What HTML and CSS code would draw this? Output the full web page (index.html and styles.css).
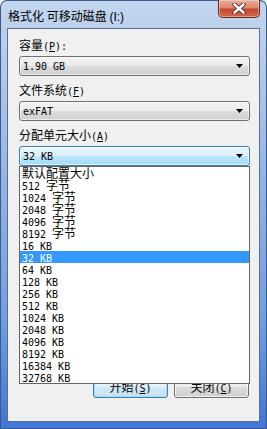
FILE: index.html
```html
<!DOCTYPE html>
<html lang="zh-CN">

<head>
    <meta charset="UTF-8">
    <meta name="viewport" content="width=device-width, initial-scale=1.0">
    <title>格式化 可移动磁盘 (I:)</title>
    <link rel="stylesheet" href="styles.css">
</head>

<body>
    <div class="window">
        <div class="titlebar">
            <span class="title">格式化 可移动磁盘 <span class="ui">(I:)</span></span>
            <button class="close" aria-label="关闭">
                <svg width="14" height="11" viewBox="0 0 14 11">
                    <path d="M2.5 1.5 L11.5 9.5 M11.5 1.5 L2.5 9.5" stroke="#4a1a12" stroke-width="4.2" stroke-linecap="round" />
                    <path d="M2.5 1.5 L11.5 9.5 M11.5 1.5 L2.5 9.5" stroke="#fff" stroke-width="2.6" stroke-linecap="round" />
                </svg>
            </button>
        </div>

        <div class="client">
            <div class="label">容量<span class="lat">(<u>P</u>):</span></div>
            <div class="combo">
                <span class="lat">1.90 GB</span>
                <svg class="arrow" width="7" height="4" viewBox="0 0 7 4"><path d="M0 0 H7 L3.5 4 Z" /></svg>
            </div>

            <div class="label">文件系统<span class="lat">(<u>F</u>)</span></div>
            <div class="combo">
                <span class="lat">exFAT</span>
                <svg class="arrow" width="7" height="4" viewBox="0 0 7 4"><path d="M0 0 H7 L3.5 4 Z" /></svg>
            </div>

            <div class="label">分配单元大小<span class="lat">(<u>A</u>)</span></div>
            <div class="combo-wrap">
                <div class="combo hot">
                    <span class="lat">32 KB</span>
                    <svg class="arrow" width="7" height="4" viewBox="0 0 7 4"><path d="M0 0 H7 L3.5 4 Z" /></svg>
                </div>
                <ul class="dropdown">
                    <li>默认配置大小</li>
                    <li><span class="lat">512 </span>字节</li>
                    <li><span class="lat">1024 </span>字节</li>
                    <li><span class="lat">2048 </span>字节</li>
                    <li><span class="lat">4096 </span>字节</li>
                    <li><span class="lat">8192 </span>字节</li>
                    <li><span class="lat">16 KB</span></li>
                    <li class="selected"><span class="lat">32 KB</span></li>
                    <li><span class="lat">64 KB</span></li>
                    <li><span class="lat">128 KB</span></li>
                    <li><span class="lat">256 KB</span></li>
                    <li><span class="lat">512 KB</span></li>
                    <li><span class="lat">1024 KB</span></li>
                    <li><span class="lat">2048 KB</span></li>
                    <li><span class="lat">4096 KB</span></li>
                    <li><span class="lat">8192 KB</span></li>
                    <li><span class="lat">16384 KB</span></li>
                    <li><span class="lat">32768 KB</span></li>
                </ul>
            </div>

            <div class="buttons">
                <button class="btn default">开始<span class="lat">(<u>S</u>)</span></button>
                <button class="btn">关闭<span class="lat">(<u>C</u>)</span></button>
            </div>
        </div>
    </div>
</body>

</html>
```

FILE: styles.css
```css
body {
    margin: 0;
    font-family: "Noto Sans CJK SC", sans-serif;
    font-size: 12px;
    color: #000;
}

.window {
    width: 267px;
    height: 429px;
    box-sizing: border-box;
    padding: 0 7px 7px;
    display: flex;
    flex-direction: column;
    border-radius: 7px 7px 0 0;
    background: linear-gradient(180deg, #c3d6ee 0%, #b6cdea 12%, #8fb2e3 45%, #6f9ee0 75%, #3f76d6 100%);
    box-shadow: inset 0 0 0 1px #3a5a8c;
}

.titlebar {
    height: 28px;
    display: flex;
    justify-content: space-between;
    align-items: flex-start;
}

.title {
    margin: 9px 0 0 1px;
    line-height: 14px;
    color: #000;
}

.ui {
    font-family: "Liberation Sans", sans-serif;
}

.close {
    width: 42px;
    height: 18px;
    padding: 0;
    border: 1px solid #6b2a1f;
    border-top: none;
    border-radius: 0 0 5px 5px;
    background: linear-gradient(180deg, #eab0a0 0%, #da8670 45%, #c4482d 55%, #d4694c 100%);
    box-shadow: inset 0 0 0 1px rgba(255, 220, 210, 0.5);
    display: flex;
    align-items: center;
    justify-content: center;
}

.client {
    flex: 1;
    border: 1px solid #5c6f90;
    background: #f0f0f0;
    padding: 8px 9px 0 11px;
}

.lat {
    font-family: "DejaVu Sans Mono", monospace;
    font-size: 10px;
}

.label {
    line-height: 16px;
    margin: 6px 0 1px;
}

.label:first-child {
    margin-top: 0;
}

.combo {
    height: 20px;
    box-sizing: border-box;
    border: 1px solid #707070;
    border-radius: 3px;
    padding: 0 6px 0 3px;
    display: flex;
    align-items: center;
    justify-content: space-between;
    background: linear-gradient(180deg, #f2f2f2 0%, #ebebeb 50%, #dddddd 50%, #cfcfcf 100%);
    box-shadow: inset 0 0 0 1px rgba(255, 255, 255, 0.6);
}

.combo.hot {
    border-color: #3c7fb1;
    background: linear-gradient(180deg, #eaf6fd 0%, #d9f0fc 50%, #bee6fd 50%, #a7d9f5 100%);
}

.arrow {
    fill: #000;
}

.combo-wrap {
    position: relative;
}

.dropdown {
    position: absolute;
    top: 100%;
    left: 0;
    right: 0;
    margin: 0;
    padding: 0;
    list-style: none;
    background: #fff;
    border: 1px solid #646464;
    z-index: 2;
}

.dropdown li {
    height: 12px;
    line-height: 12px;
    padding-left: 2px;
    white-space: pre;
}

.dropdown li.selected {
    background: #3399ff;
    color: #fff;
}

.buttons {
    margin: 209px 1px 0 0;
    display: flex;
    justify-content: flex-end;
    gap: 6px;
}

.btn {
    width: 75px;
    height: 23px;
    padding: 0;
    font-family: inherit;
    font-size: 12px;
    color: #000;
    border: 1px solid #707070;
    border-radius: 3px;
    background: linear-gradient(180deg, #f2f2f2 0%, #ebebeb 50%, #dddddd 50%, #cfcfcf 100%);
    box-shadow: inset 0 0 0 1px rgba(255, 255, 255, 0.7);
}

.btn.default {
    border-color: #3c7fb1;
    box-shadow: inset 0 0 0 1px #a6dcf7;
    background: linear-gradient(180deg, #eef7fd 0%, #e3f1fb 50%, #d3e9f8 50%, #c6e2f6 100%);
}
```
